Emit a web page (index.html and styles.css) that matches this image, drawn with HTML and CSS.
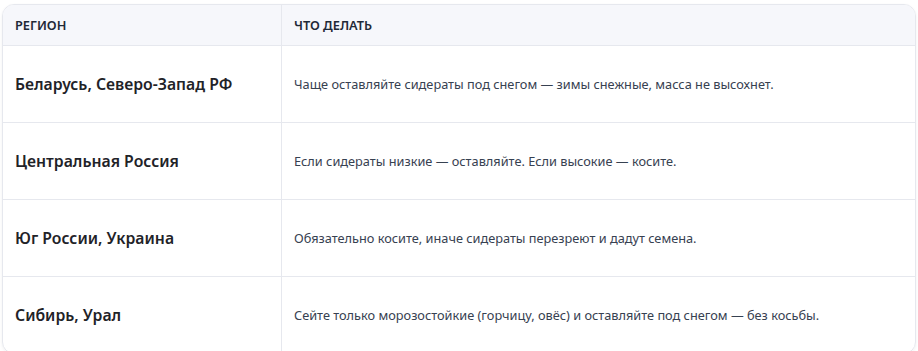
FILE: index.html
```html
<!DOCTYPE html>
<html lang="ru">
<head>
<meta charset="utf-8">
<link rel="stylesheet" href="styles.css">
</head>
<body>
<div class="wrap">
  <table class="tbl">
    <thead>
      <tr><th class="c1">Регион</th><th>Что делать</th></tr>
    </thead>
    <tbody>
      <tr><td class="c1">Беларусь, Северо-Запад РФ</td><td>Чаще оставляйте сидераты под снегом — зимы снежные, масса не высохнет.</td></tr>
      <tr><td class="c1">Центральная Россия</td><td>Если сидераты низкие — оставляйте. Если высокие — косите.</td></tr>
      <tr><td class="c1">Юг России, Украина</td><td>Обязательно косите, иначе сидераты перезреют и дадут семена.</td></tr>
      <tr><td class="c1">Сибирь, Урал</td><td>Сейте только морозостойкие (горчицу, овёс) и оставляйте под снегом — без косьбы.</td></tr>
    </tbody>
  </table>
</div>
</body>
</html>
```
FILE: styles.css
```css
html, body { margin: 0; padding: 0; background: #ffffff; }
body { padding: 4px 2px 0 2px; font-family: "Noto Sans", "Open Sans", sans-serif; }
.wrap {
  border: 1px solid #e6e8ee;
  border-radius: 12px;
  overflow: hidden;
  box-shadow: 0 1px 3px rgba(0,0,0,0.06);
}
.tbl { width: 100%; border-collapse: collapse; border-spacing: 0; }
.tbl th {
  background: #f6f7fb;
  text-align: left;
  font-size: 12.75px;
  font-weight: 600;
  color: #1f2937;
  text-transform: uppercase;
  height: 40px;
  padding: 0 12px;
  border-bottom: 1px solid #e6e8ee;
}
.tbl td {
  height: 76px;
  padding: 0 12px;
  font-size: 12.75px;
  color: #374151;
  border-bottom: 1px solid #e6e8ee;
  vertical-align: middle;
}
.tbl tbody tr:last-child td { border-bottom: none; }
.tbl .c1 { width: 254px; border-right: 1px solid #e6e8ee; }
.tbl td.c1 { font-size: 15.75px; font-weight: 600; color: #1f2328; }
```
